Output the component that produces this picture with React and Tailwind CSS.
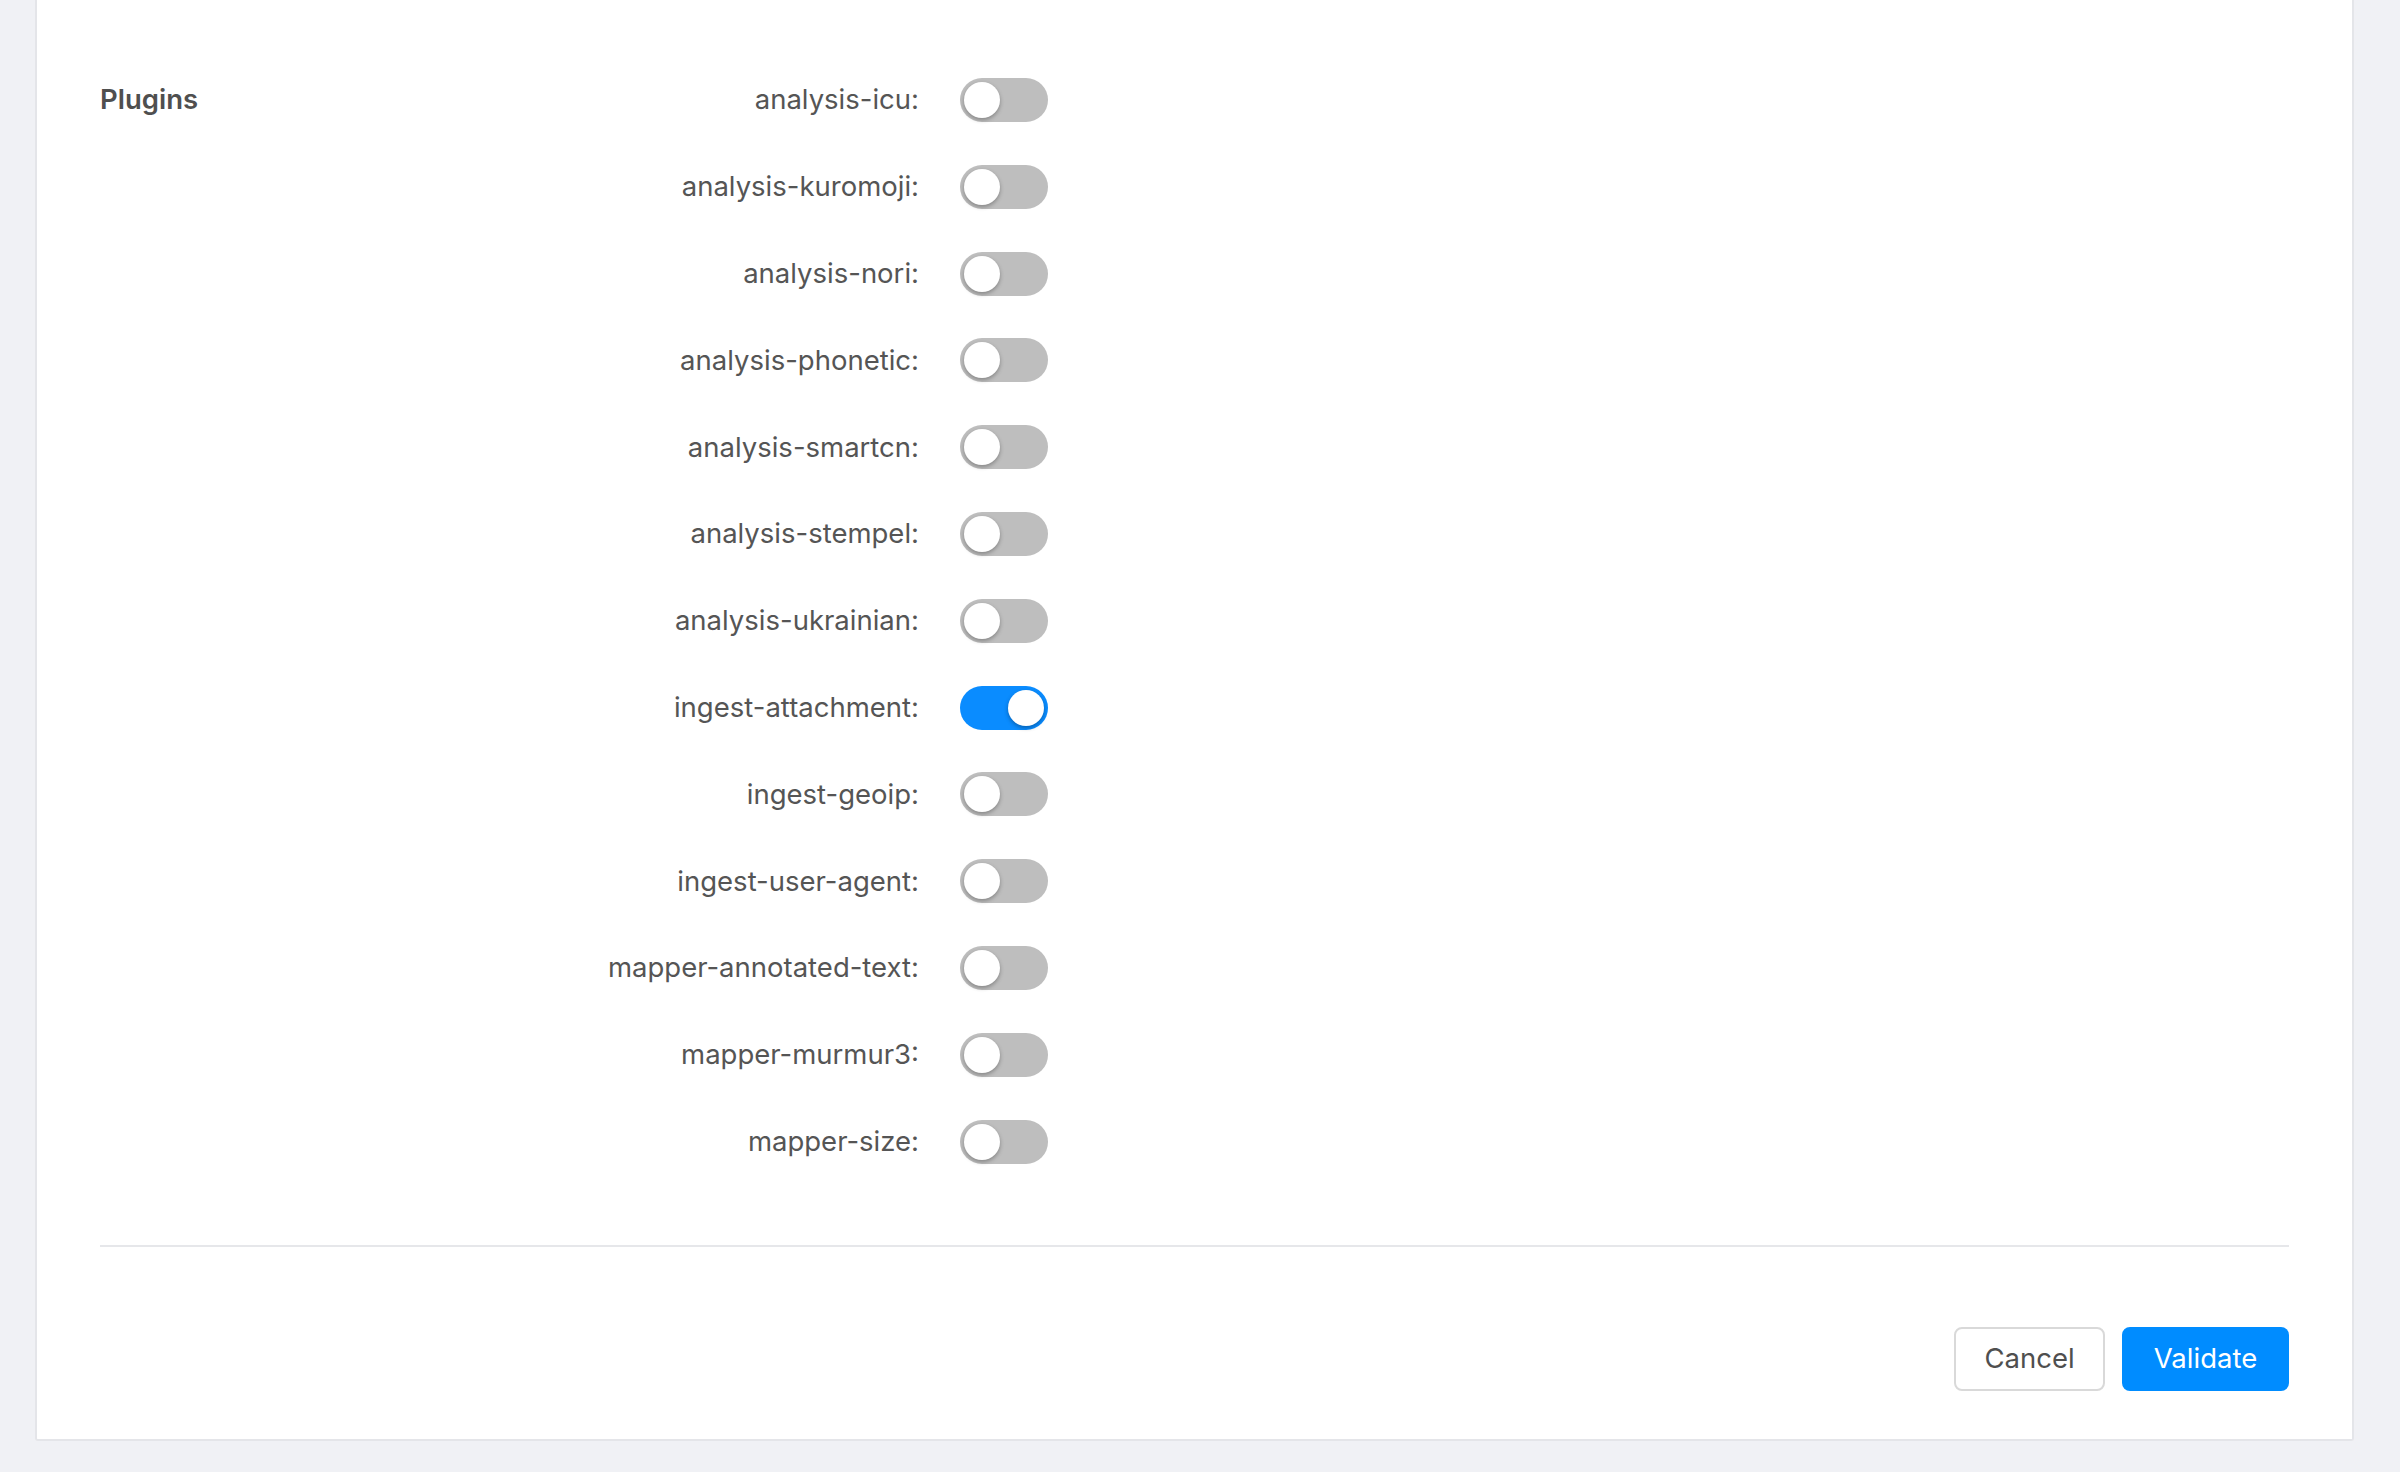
import React from "react";

const plugins = [
  ["analysis-icu", false],
  ["analysis-kuromoji", false],
  ["analysis-nori", false],
  ["analysis-phonetic", false],
  ["analysis-smartcn", false],
  ["analysis-stempel", false],
  ["analysis-ukrainian", false],
  ["ingest-attachment", true],
  ["ingest-geoip", false],
  ["ingest-user-agent", false],
  ["mapper-annotated-text", false],
  ["mapper-murmur3", false],
  ["mapper-size", false],
];

function Toggle({ on }) {
  return (
    <div
      className={
        "relative h-[44px] w-[88px] shrink-0 rounded-full " +
        (on ? "bg-[#0a8cff]" : "bg-[#bebebe]")
      }
    >
      <div
        className={
          "absolute top-[4px] h-[36px] w-[36px] rounded-full bg-white shadow-[0_2px_4px_rgba(0,0,0,0.3)] " +
          (on ? "left-[48px]" : "left-[4px]")
        }
      />
    </div>
  );
}

export default function App() {
  return (
    <div
      className="min-h-[1472px] w-full bg-[#f0f1f5] pl-[35px] pr-[46px] pb-[34px]"
      style={{ fontFamily: "Inter, 'Liberation Sans', sans-serif" }}
    >
      <div className="border-2 border-t-0 border-[#e4e5e9] bg-white px-[63px] pt-[78px] pb-[48px] rounded-b-[3px]">
        <div className="flex">
          <div className="w-[280px] shrink-0 h-[44px] flex items-center text-[27.5px] font-semibold text-[#4f4f4f]">
            Plugins
          </div>
          <div className="flex flex-col gap-[42.8px]">
            {plugins.map(([name, on]) => (
              <div key={name} className="flex items-center h-[44px]">
                <div className="w-[540px] text-right text-[27.5px] text-[#555555] pr-[1px]">
                  {name}:
                </div>
                <div className="ml-[40px]">
                  <Toggle on={on} />
                </div>
              </div>
            ))}
          </div>
        </div>
        <div className="mt-[81px] h-[2px] bg-[#e6e7ea]" />
        <div className="mt-[80px] flex justify-end gap-[17px]">
          <button className="h-[64px] w-[151px] rounded-[8px] border-2 border-[#d9d9d9] bg-white text-[27.5px] text-[#4f4f4f]">
            Cancel
          </button>
          <button className="h-[64px] w-[167px] rounded-[8px] bg-[#008cff] text-[27.5px] text-white">
            Validate
          </button>
        </div>
      </div>
    </div>
  );
}
